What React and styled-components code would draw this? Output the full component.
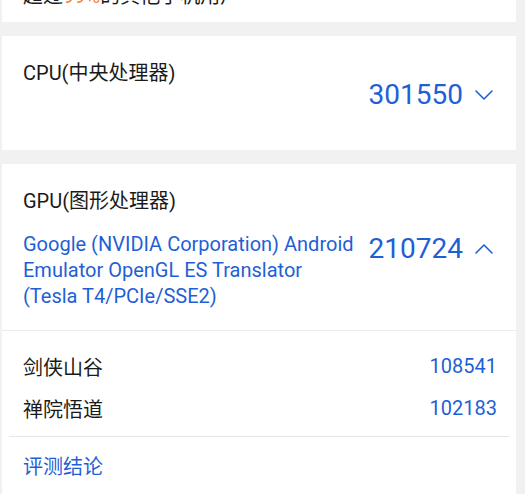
import styled, { createGlobalStyle } from "styled-components";

const BLUE = "#1f5fd6";

const GlobalStyle = createGlobalStyle`
  html, body {
    margin: 0;
    padding: 0;
    background: #f1f1f1;
  }
  body {
    font-family: Roboto, "Noto Sans CJK SC", sans-serif;
    color: #1a1a1a;
    overflow: hidden;
  }
`;

// page is scrolled a little, so the first card is cut at the top
const Page = styled.div`
  width: 525px;
  margin-top: -33px;
  display: flex;
  flex-direction: column;
  gap: 14px;
`;

const Card = styled.section`
  background: #fff;
  margin: 0 9px 0 2px;
`;

const Summary = styled.div`
  padding: 16px 21px 13px;
  font-size: 20px;
  line-height: 26px;
  .hl {
    color: #f5843a;
  }
`;

const ItemHead = styled.div`
  display: flex;
  align-items: center;
  padding: 24px 23px 21px 21px;
  border-bottom: ${(p) => (p.open ? "1px solid #ebebeb" : "none")};
`;

const ItemInfo = styled.div`
  flex: 1;
  min-width: 0;
`;

const ItemTitle = styled.div`
  font-size: 20px;
  line-height: 26px;
`;

const ItemName = styled.div`
  margin-top: 17px;
  min-height: 26px;
  font-size: 20px;
  line-height: 26px;
  color: ${BLUE};
`;

const Score = styled.div`
  display: flex;
  align-items: center;
  gap: 12px;
  margin-left: 10px;
  font-size: 28px;
  line-height: 34px;
  color: ${BLUE};
`;

const SubList = styled.div`
  padding: 14px 19px 7px 21px;
`;

const SubRow = styled.div`
  display: flex;
  justify-content: space-between;
  align-items: center;
  height: 42px;
  font-size: 20px;
  span:last-child {
    color: ${BLUE};
  }
`;

const Divider = styled.div`
  margin: 0 7px;
  height: 1px;
  background: #e6e6e6;
`;

const Conclusion = styled.div`
  padding: 17px 21px 30px;
  font-size: 20px;
  line-height: 26px;
  color: ${BLUE};
`;

const Chevron = ({ up }) => (
  <svg width="18" height="10" viewBox="0 0 18 10" fill="none">
    <path
      d={up ? "M1 9 L9 1 L17 9" : "M1 1 L9 9 L17 1"}
      stroke={BLUE}
      strokeWidth="1.6"
      strokeLinecap="round"
      strokeLinejoin="round"
    />
  </svg>
);

const subScores = [
  { name: "剑侠山谷", score: 108541 },
  { name: "禅院悟道", score: 102183 },
];

const App = () => {
  return (
    <>
      <GlobalStyle />
      <Page>
        <Card>
          <Summary>
            超过<span className="hl">99%</span>的其他手机用户
          </Summary>
        </Card>

        <Card>
          <ItemHead>
            <ItemInfo>
              <ItemTitle>CPU(中央处理器)</ItemTitle>
              <ItemName />
            </ItemInfo>
            <Score>
              301550
              <Chevron />
            </Score>
          </ItemHead>
        </Card>

        <Card>
          <ItemHead open>
            <ItemInfo>
              <ItemTitle>GPU(图形处理器)</ItemTitle>
              <ItemName>
                Google (NVIDIA Corporation) Android Emulator OpenGL ES
                Translator (Tesla T4/PCIe/SSE2)
              </ItemName>
            </ItemInfo>
            <Score>
              210724
              <Chevron up />
            </Score>
          </ItemHead>
          <SubList>
            {subScores.map((s) => (
              <SubRow key={s.name}>
                <span>{s.name}</span>
                <span>{s.score}</span>
              </SubRow>
            ))}
          </SubList>
          <Divider />
          <Conclusion>评测结论</Conclusion>
        </Card>
      </Page>
    </>
  );
};

export default App;
